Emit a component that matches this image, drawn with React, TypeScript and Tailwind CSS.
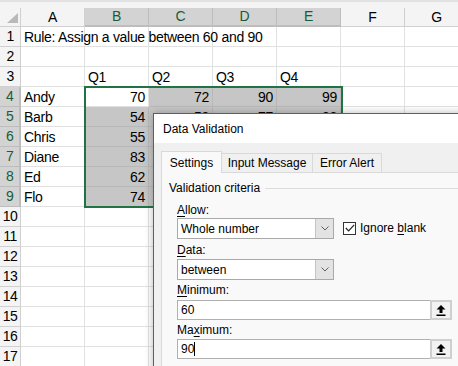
import React from 'react';

const GREEN = 'border-[#217346]';

const cols = ['A', 'B', 'C', 'D', 'E', 'F', 'G'];
const selCols = ['B', 'C', 'D', 'E'];

type Cell = { text: string; right?: boolean };

// C5:E9 sit behind the dialog; only row 5 peeks out above it
const rows: Record<number, Record<string, Cell>> = {
  1: { A: { text: 'Rule: Assign a value between 60 and 90' } },
  3: { B: { text: 'Q1' }, C: { text: 'Q2' }, D: { text: 'Q3' }, E: { text: 'Q4' } },
  4: { A: { text: 'Andy' }, B: { text: '70', right: true }, C: { text: '72', right: true }, D: { text: '90', right: true }, E: { text: '99', right: true } },
  5: { A: { text: 'Barb' }, B: { text: '54', right: true }, C: { text: '58', right: true }, D: { text: '77', right: true }, E: { text: '88', right: true } },
  6: { A: { text: 'Chris' }, B: { text: '55', right: true } },
  7: { A: { text: 'Diane' }, B: { text: '83', right: true } },
  8: { A: { text: 'Ed' }, B: { text: '62', right: true } },
  9: { A: { text: 'Flo' }, B: { text: '74', right: true } },
};

function isSelected(r: number, c: string) {
  return r >= 4 && r <= 9 && selCols.includes(c) && !(r === 4 && c === 'B');
}

function Sheet() {
  const rowNums = Array.from({ length: 17 }, (_, i) => i + 1);
  return (
    <div className="flex flex-col text-[14px] tracking-[-0.3px] text-black">
      <div className="h-[8px] bg-[#f4f4f4] border-t-2 border-[#e2e2e2]" />
      {/* column headers */}
      <div className="flex h-[19px]">
        <div className="w-[21px] shrink-0 bg-[#f4f4f4] border-r border-b border-[#d0d0d0] flex items-end justify-end pr-[2px] pb-[3px]">
          <svg width="11" height="10" viewBox="0 0 11 10">
            <polygon points="0,10 11,10 11,0" fill="#b9b9b9" />
          </svg>
        </div>
        {cols.map((c) =>
          selCols.includes(c) ? (
            <div key={c} className={`w-[64px] shrink-0 bg-[#d3d3d3] border-r border-[#bdbdbd] border-b-2 ${GREEN} flex items-center justify-center text-[#185c37]`}>
              {c}
            </div>
          ) : (
            <div key={c} className="w-[64px] shrink-0 bg-[#f4f4f4] border-r border-b border-[#d0d0d0] flex items-center justify-center">
              {c}
            </div>
          )
        )}
      </div>
      {rowNums.map((r) => {
        const inSel = r >= 4 && r <= 9;
        return (
          <div key={r} className="flex h-[20px]">
            <div
              className={
                inSel
                  ? `w-[21px] shrink-0 bg-[#d3d3d3] border-b border-[#bdbdbd] border-r-2 ${GREEN} flex items-center justify-center text-[#185c37] tracking-[-0.6px]`
                  : 'w-[21px] shrink-0 bg-[#f4f4f4] border-b border-r border-[#d0d0d0] flex items-center justify-center tracking-[-0.6px]'
              }
            >
              {r}
            </div>
            {cols.map((c) => {
              const cell = rows[r]?.[c];
              const sel = isSelected(r, c);
              return (
                <div
                  key={c}
                  className={`w-[64px] shrink-0 border-r border-b border-[#e1e1e1] flex items-center px-[3px] pt-[1px] whitespace-nowrap ${
                    sel ? 'bg-[#c6c6c6] border-r-[#b8b8b8] border-b-[#b8b8b8]' : 'bg-white'
                  } ${cell?.right ? 'justify-end' : 'justify-start'} ${c === 'A' && r === 1 ? 'overflow-visible relative z-10' : 'overflow-hidden'}`}
                >
                  {cell?.text}
                </div>
              );
            })}
          </div>
        );
      })}
    </div>
  );
}

function Underline({ children }: { children: React.ReactNode }) {
  return <span className="underline underline-offset-[2px]">{children}</span>;
}

function Combo({ value }: { value: string }) {
  return (
    <div className="flex w-[157px] h-[21px] border border-[#a9a9a9] bg-white">
      <div className="flex-1 flex items-center pl-[3px]">{value}</div>
      <div className="w-[18px] bg-[#e3e3e3] border-l border-[#c4c4c4] flex items-center justify-center">
        <svg width="8" height="5" viewBox="0 0 8 5">
          <polyline points="0.5,0.5 4,4 7.5,0.5" fill="none" stroke="#606060" strokeWidth="1" />
        </svg>
      </div>
    </div>
  );
}

function RangeInput({ value, caret }: { value: string; caret?: boolean }) {
  return (
    <div className="flex w-[275px] h-[20px] border border-[#b0b0b0] bg-white">
      <div className="flex-1 flex items-center pl-[3px]">
        {value}
        {caret && <span className="inline-block w-px h-[14px] bg-black" />}
      </div>
      <div className="w-[22px] bg-[#cfcfcf] p-[2px] -my-px -mr-px">
        <div className="w-full h-full bg-[#f2f2f2] flex items-center justify-center">
          <svg width="10" height="11" viewBox="0 0 10 11">
            <polygon points="5,0 9.5,4.5 6.5,4.5 6.5,8 3.5,8 3.5,4.5 0.5,4.5" fill="#000" />
            <rect x="0.5" y="9.5" width="9" height="1.5" fill="#000" />
          </svg>
        </div>
      </div>
    </div>
  );
}

function Dialog() {
  return (
    <div className="absolute left-[153px] top-[113px] w-[330px] h-[280px] border border-[#5f5f5f] bg-[#f0f0f0] shadow-[0_0_8px_rgba(0,0,0,0.28)] text-[12px] text-black font-['Liberation_Sans',sans-serif]">
      <div className="h-[29px] bg-white flex items-center pl-[9px]">Data Validation</div>
      <div className="pl-[7px] pt-[8px]">
        <div className="flex items-end h-[21px] relative z-10">
          <div className="h-[22px] w-[61px] bg-[#f9f9f9] border border-b-0 border-[#d9d9d9] flex items-center justify-center -mb-px">
            Settings
          </div>
          <div className="h-[19px] w-[91px] bg-[#f0f0f0] border-t border-r border-[#d9d9d9] flex items-center justify-center">
            Input Message
          </div>
          <div className="h-[19px] w-[69px] bg-[#f0f0f0] border-t border-r border-[#d9d9d9] flex items-center justify-center">
            Error Alert
          </div>
        </div>
        <div className="h-[240px] bg-[#f9f9f9] border-t border-l border-[#d9d9d9] pl-[7px] pt-[7px]">
          <div className="h-[16px] flex items-center gap-[5px]">
            <span>Validation criteria</span>
            <div className="flex-1 h-px bg-[#dcdcdc]" />
          </div>
          <div className="pl-[8px]">
            <div className="mt-[7px] h-[14px] flex items-center">
              <Underline>A</Underline>llow:
            </div>
            <div className="mt-[1px] flex items-start gap-[9px]">
              <Combo value="Whole number" />
              <div className="flex items-center gap-[4px] mt-[1px]">
                <div className="w-[13px] h-[13px] border border-[#333] bg-white flex items-center justify-center">
                  <svg width="10" height="8" viewBox="0 0 10 8">
                    <polyline points="0.8,4 3.6,6.8 9.2,0.8" fill="none" stroke="#222" strokeWidth="1.2" />
                  </svg>
                </div>
                <span>
                  Ignore <Underline>b</Underline>lank
                </span>
              </div>
            </div>
            <div className="mt-[4px] h-[14px] flex items-center">
              <Underline>D</Underline>ata:
            </div>
            <div className="mt-[2px]">
              <Combo value="between" />
            </div>
            <div className="mt-[3px] h-[14px] flex items-center">
              <Underline>M</Underline>inimum:
            </div>
            <div className="mt-[3px]">
              <RangeInput value="60" />
            </div>
            <div className="mt-[3px] h-[14px] flex items-center">
              Ma<Underline>x</Underline>imum:
            </div>
            <div className="mt-[2px]">
              <RangeInput value="90" caret />
            </div>
          </div>
        </div>
      </div>
    </div>
  );
}

export default function App() {
  return (
    <div className="relative w-[458px] h-[366px] overflow-hidden bg-white font-['Liberation_Sans',sans-serif]">
      <Sheet />
      <div className={`absolute left-[84px] top-[86px] w-[259px] h-[122px] border-2 ${GREEN} pointer-events-none`} />
      <Dialog />
    </div>
  );
}
